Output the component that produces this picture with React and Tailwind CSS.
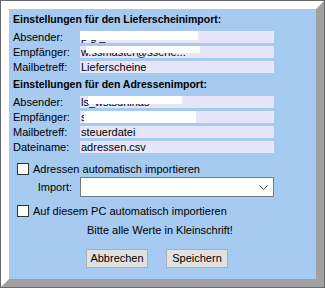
import React from 'react';

const font = { fontFamily: '"Liberation Sans", Arial, sans-serif' };

function Field({ label, value, mask }) {
  return (
    <div className="flex items-center h-[12px]">
      <div className="w-[67px] leading-[12px]">{label}</div>
      <div className="relative w-[194px] h-[12px] bg-[#e6e6fa] leading-[12px] pl-[1px] overflow-hidden whitespace-nowrap">
        {value}
        {mask && (
          <div
            className="absolute top-0 bg-white"
            style={{ left: mask[0], width: mask[1], height: mask[2] }}
          />
        )}
      </div>
    </div>
  );
}

function Check({ label }) {
  return (
    <div className="flex items-center h-[12px] pl-[4px]">
      <div className="w-[12px] h-[12px] border border-[#333333] bg-white" />
      <span className="ml-[4px] leading-[12px]">{label}</span>
    </div>
  );
}

export default function App() {
  return (
    <div className="w-[325px] h-[288px] border border-[#696969] text-[11px] text-black" style={font}>
      <div className="h-full border-8 border-t-white border-l-white border-r-[#a0a0a0] border-b-[#a0a0a0] bg-[#a6caf0] pl-[4px] pt-[1px]">
        <div className="font-bold text-[10.5px] leading-[19px] h-[19px]">Einstellungen für den Lieferscheinimport:</div>
        <div className="flex flex-col gap-[3px] mt-[2px]">
          <Field label="Absender:" value="p     g     _" mask={[0, 118, 9]} />
          <Field label="Empfänger:" value="w.ssmaster@sserie..." mask={[6, 114, 7]} />
          <Field label="Mailbetreff:" value="Lieferscheine" />
        </div>
        <div className="font-bold text-[10.5px] leading-[19px] h-[19px] mt-[2px]">Einstellungen für den Adressenimport:</div>
        <div className="flex flex-col gap-[3px] mt-[2px]">
          <Field label="Absender:" value="ls_wstsuhinas" mask={[8, 94, 8]} />
          <Field label="Empfänger:" value="s" mask={[4, 112, 12]} />
          <Field label="Mailbetreff:" value="steuerdatei" />
          <Field label="Dateiname:" value="adressen.csv" />
        </div>
        <div className="mt-[10px]">
          <Check label="Adressen automatisch importieren" />
        </div>
        <div className="flex items-center h-[20px] mt-[2px]">
          <div className="w-[67px] text-right pr-[8px]">Import:</div>
          <div className="w-[194px] h-[20px] border border-[#7a7a7a] bg-white flex items-center justify-end pr-[5px]">
            <svg width="9" height="5" viewBox="0 0 9 5" fill="none" stroke="#444" strokeWidth="1">
              <path d="M0.5 0.5 L4.5 4.5 L8.5 0.5" />
            </svg>
          </div>
        </div>
        <div className="mt-[8px]">
          <Check label="Auf diesem PC automatisch importieren" />
        </div>
        <div className="mt-[5px] leading-[17px] h-[17px] pl-[74px]">Bitte alle Werte in Kleinschrift!</div>
        <div className="flex gap-[18px] mt-[10px] pl-[73px]">
          <button className="w-[62px] h-[19px] bg-[#e1e1e1] border border-[#adadad] leading-[17px]">Abbrechen</button>
          <button className="w-[62px] h-[19px] bg-[#e1e1e1] border border-[#adadad] leading-[17px]">Speichern</button>
        </div>
      </div>
    </div>
  );
}
